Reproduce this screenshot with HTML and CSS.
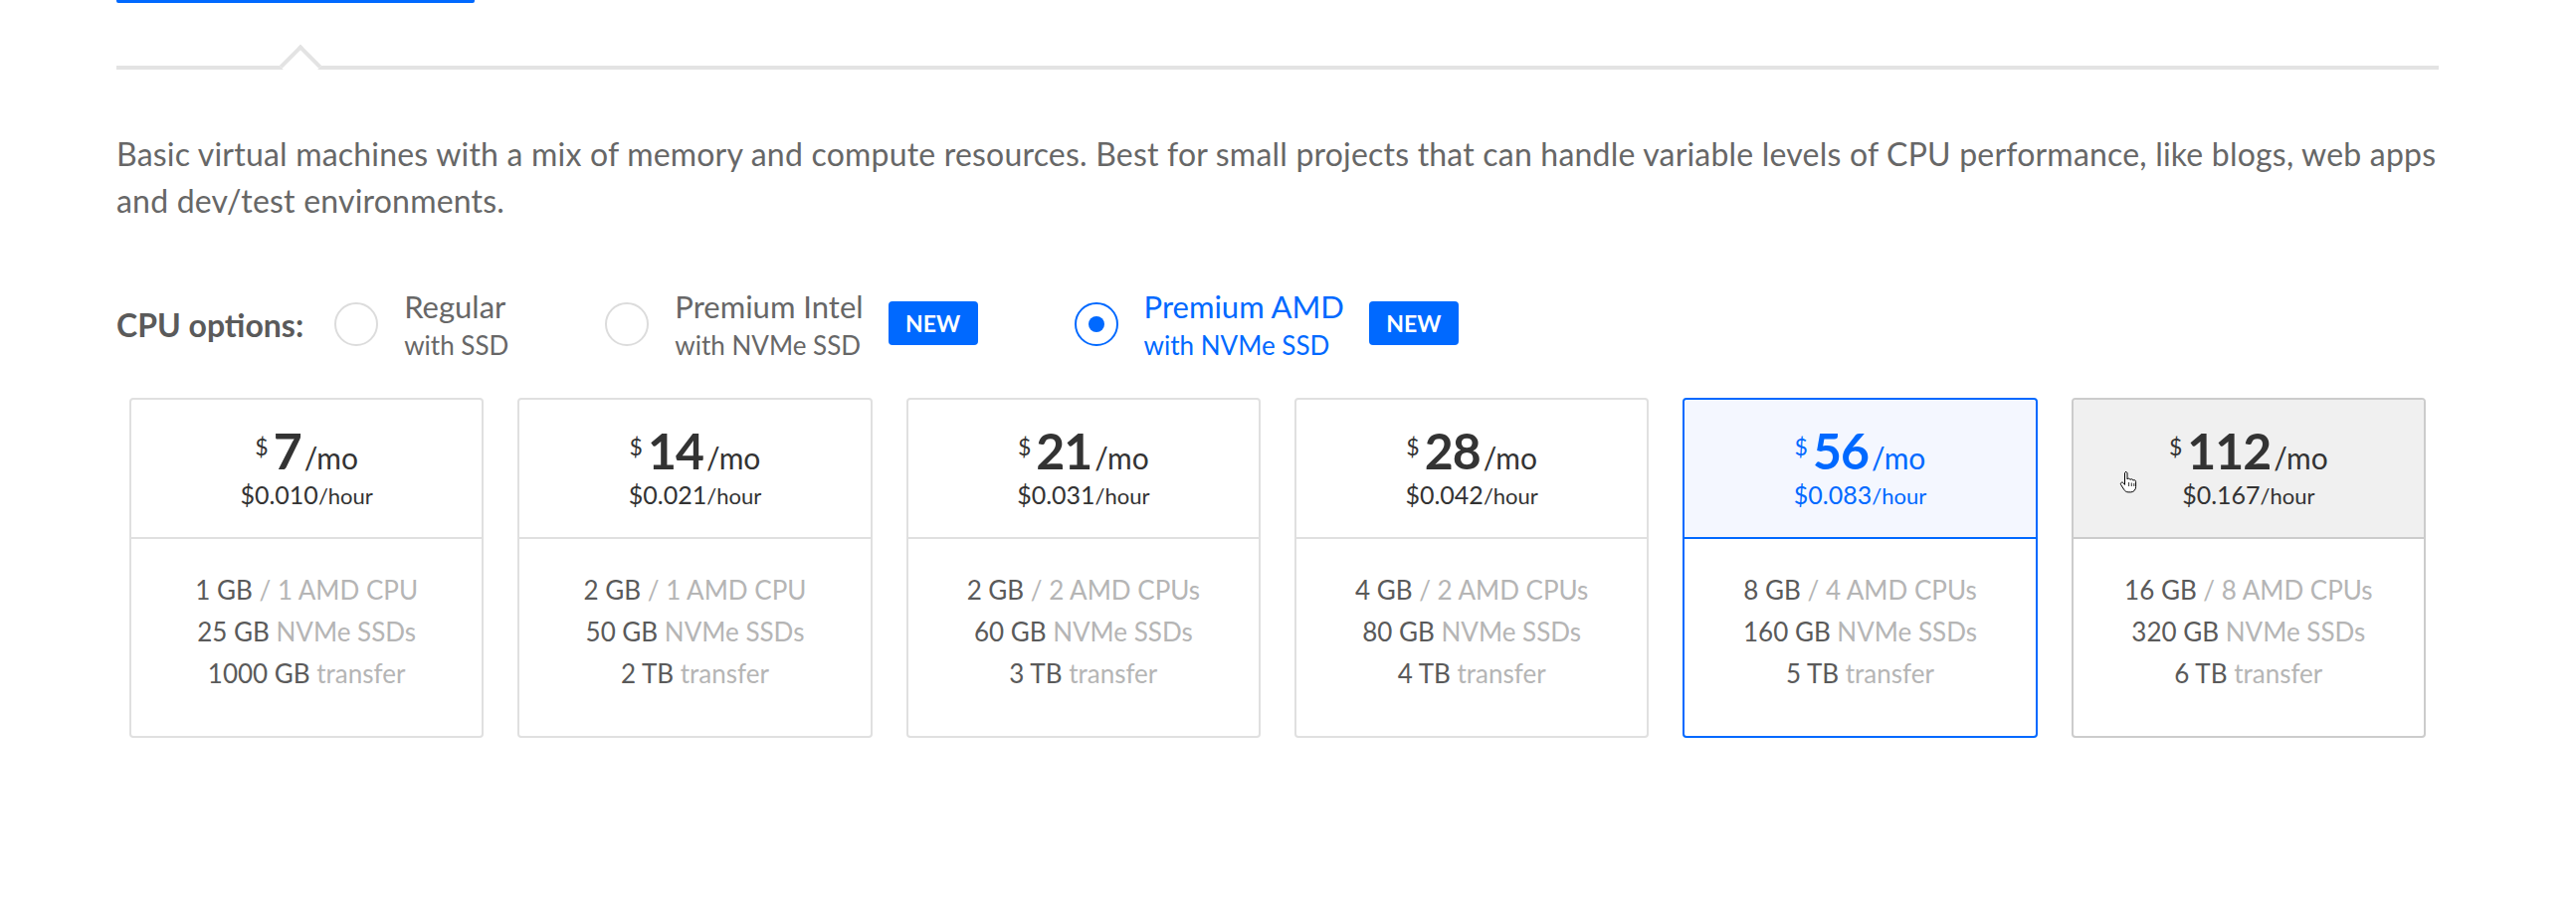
FILE: index.html
```html
<!DOCTYPE html>
<html lang="en">
<head>
<meta charset="utf-8">
<title>Droplet plans</title>
<link rel="stylesheet" href="styles.css">
</head>
<body>
<div class="page">
  <div class="tabs"><div class="tab-active"></div></div>
  <div class="rule"><span class="notch"></span></div>
  <p class="desc">Basic virtual machines with a mix of memory and compute resources. Best for small projects that can handle variable levels of CPU performance, like blogs, web apps<br>and dev/test environments.</p>

  <div class="cpu">
    <span class="cpu-label">CPU options:</span>
    <label class="opt">
      <span class="radio"></span>
      <span class="opt-text"><span class="opt-title">Regular</span><span class="opt-sub">with SSD</span></span>
    </label>
    <label class="opt">
      <span class="radio"></span>
      <span class="opt-text"><span class="opt-title">Premium Intel</span><span class="opt-sub">with NVMe SSD</span></span>
      <span class="badge">NEW</span>
    </label>
    <label class="opt selected">
      <span class="radio"></span>
      <span class="opt-text"><span class="opt-title">Premium AMD</span><span class="opt-sub">with NVMe SSD</span></span>
      <span class="badge">NEW</span>
    </label>
  </div>

  <div class="cards">
    <div class="card">
      <div class="card-head">
        <div class="price"><span class="cur">$</span><span class="amt">7</span><span class="per">/mo</span></div>
        <div class="hourly">$0.010<span class="hr">/hour</span></div>
      </div>
      <div class="card-body">
        <div class="spec"><span class="v">1 GB</span> / 1 AMD CPU</div>
        <div class="spec"><span class="v">25 GB</span> NVMe SSDs</div>
        <div class="spec"><span class="v">1000 GB</span> transfer</div>
      </div>
    </div>
    <div class="card">
      <div class="card-head">
        <div class="price"><span class="cur">$</span><span class="amt">14</span><span class="per">/mo</span></div>
        <div class="hourly">$0.021<span class="hr">/hour</span></div>
      </div>
      <div class="card-body">
        <div class="spec"><span class="v">2 GB</span> / 1 AMD CPU</div>
        <div class="spec"><span class="v">50 GB</span> NVMe SSDs</div>
        <div class="spec"><span class="v">2 TB</span> transfer</div>
      </div>
    </div>
    <div class="card">
      <div class="card-head">
        <div class="price"><span class="cur">$</span><span class="amt">21</span><span class="per">/mo</span></div>
        <div class="hourly">$0.031<span class="hr">/hour</span></div>
      </div>
      <div class="card-body">
        <div class="spec"><span class="v">2 GB</span> / 2 AMD CPUs</div>
        <div class="spec"><span class="v">60 GB</span> NVMe SSDs</div>
        <div class="spec"><span class="v">3 TB</span> transfer</div>
      </div>
    </div>
    <div class="card">
      <div class="card-head">
        <div class="price"><span class="cur">$</span><span class="amt">28</span><span class="per">/mo</span></div>
        <div class="hourly">$0.042<span class="hr">/hour</span></div>
      </div>
      <div class="card-body">
        <div class="spec"><span class="v">4 GB</span> / 2 AMD CPUs</div>
        <div class="spec"><span class="v">80 GB</span> NVMe SSDs</div>
        <div class="spec"><span class="v">4 TB</span> transfer</div>
      </div>
    </div>
    <div class="card selected">
      <div class="card-head">
        <div class="price"><span class="cur">$</span><span class="amt">56</span><span class="per">/mo</span></div>
        <div class="hourly">$0.083<span class="hr">/hour</span></div>
      </div>
      <div class="card-body">
        <div class="spec"><span class="v">8 GB</span> / 4 AMD CPUs</div>
        <div class="spec"><span class="v">160 GB</span> NVMe SSDs</div>
        <div class="spec"><span class="v">5 TB</span> transfer</div>
      </div>
    </div>
    <div class="card hover">
      <div class="card-head">
        <div class="price"><span class="cur">$</span><span class="amt">112</span><span class="per">/mo</span></div>
        <div class="hourly">$0.167<span class="hr">/hour</span></div>
      </div>
      <div class="card-body">
        <div class="spec"><span class="v">16 GB</span> / 8 AMD CPUs</div>
        <div class="spec"><span class="v">320 GB</span> NVMe SSDs</div>
        <div class="spec"><span class="v">6 TB</span> transfer</div>
      </div>
      <svg class="cursor" width="18" height="24" viewBox="0 0 18 24"><path d="M6.5 1.5c.9 0 1.5.7 1.5 1.5v6c.3-.6 1-.9 1.6-.8.8.1 1.3.7 1.4 1.3.3-.5.9-.8 1.6-.7.8.1 1.3.8 1.3 1.4.4-.4 1-.6 1.6-.4.7.2 1.1.9 1.1 1.6v5c0 3-2 5.5-5 5.5h-2.5c-2 0-3.3-1-4.3-2.5l-3.2-5c-.5-.8-.2-1.7.5-2.1.7-.4 1.5-.2 2 .4l1.4 1.7V3c0-.8.6-1.5 1.5-1.5z" fill="#fff" stroke="#000" stroke-width="1"/><path d="M9.6 12v4M12.3 12.5v3.5M14.8 13v3" stroke="#000" stroke-width="0.8" fill="none"/></svg>
    </div>
  </div>
</div>
</body>
</html>
```

FILE: styles.css
```css
html, body {
  margin: 0;
  padding: 0;
  background: #ffffff;
}

body {
  font-family: "Lato", "Liberation Sans", sans-serif;
  color: #676767;
}

.page {
  width: 2334px;
  padding-left: 117px;
}

.tabs {
  height: 66px;
}

.tab-active {
  width: 360px;
  height: 3px;
  background: #0069ff;
  border-radius: 0 0 2px 2px;
}

.rule {
  position: relative;
  height: 4px;
  background: #e3e3e3;
}

.notch {
  position: absolute;
  left: 170px;
  top: -15px;
  width: 30px;
  height: 30px;
  box-sizing: border-box;
  background: #ffffff;
  border-top: 4px solid #e3e3e3;
  border-left: 4px solid #e3e3e3;
  transform: rotate(45deg);
}

.desc {
  margin: 61px 0 0 0;
  font-size: 32px;
  letter-spacing: 0.2px;
  line-height: 47px;
  color: #676767;
  white-space: nowrap;
}

.cpu {
  display: flex;
  align-items: center;
  margin-top: 65px;
}

.cpu-label {
  font-size: 32px;
  font-weight: 700;
  color: #5a5a5a;
  margin-right: 31px;
}

.opt {
  display: flex;
  align-items: center;
  gap: 26px;
  margin-right: 97px;
}

.radio {
  width: 44px;
  height: 44px;
  box-sizing: border-box;
  border: 2px solid #dcdcdc;
  border-radius: 50%;
  display: flex;
  align-items: center;
  justify-content: center;
  flex: none;
}

.opt.selected .radio {
  border-color: #0069ff;
}

.opt.selected .radio::after {
  content: "";
  width: 16px;
  height: 16px;
  border-radius: 50%;
  background: #0069ff;
}

.opt-text {
  display: flex;
  flex-direction: column;
}

.opt-title {
  font-size: 31px;
  line-height: 36px;
  color: #676767;
}

.opt-sub {
  font-size: 26px;
  line-height: 30px;
  margin-top: 6px;
  color: #676767;
}

.opt.selected .opt-title,
.opt.selected .opt-sub {
  color: #0069ff;
}

.badge {
  width: 90px;
  height: 44px;
  border-radius: 4px;
  background: #0069ff;
  color: #ffffff;
  font-size: 23px;
  font-weight: 700;
  display: flex;
  align-items: center;
  justify-content: center;
  margin-top: -3px;
  margin-left: -1px;
}

.cards {
  display: grid;
  grid-template-columns: repeat(6, 1fr);
  gap: 34px;
  margin: 38px 13px 0 13px;
}

.card {
  position: relative;
  border: 2px solid #e0e0e0;
  border-radius: 4px;
  text-align: center;
  background: #ffffff;
}

.card-head {
  height: 140px;
  box-sizing: border-box;
  padding-top: 22px;
  border-bottom: 2px solid #e0e0e0;
  border-radius: 3px 3px 0 0;
  color: #333333;
}

.price {
  font-size: 50px;
  line-height: 50px;
  white-space: nowrap;
}

.cur {
  font-size: 23px;
  vertical-align: 14px;
  margin-right: 5px;
}

.amt {
  font-weight: 700;
  letter-spacing: -1px;
}

.per {
  font-size: 30px;
  margin-left: 3px;
}

.hourly {
  font-size: 25px;
  line-height: 34px;
  margin-top: -5px;
}

.hr {
  font-size: 22px;
}

.card-body {
  padding: 30px 0 42px 0;
}

.spec {
  font-size: 26px;
  line-height: 42px;
  color: #b5b5b5;
  white-space: nowrap;
}

.spec .v {
  color: #5a5a5a;
}

.card.selected {
  border-color: #0069ff;
}

.card.selected .card-head {
  background: #f4f7ff;
  border-bottom-color: #0069ff;
  color: #0069ff;
}

.card.hover {
  border-color: #cccccc;
}

.card.hover .card-head {
  background: #f0f0f0;
  border-bottom-color: #cccccc;
}

.cursor {
  position: absolute;
  left: 46px;
  top: 71px;
}
```
